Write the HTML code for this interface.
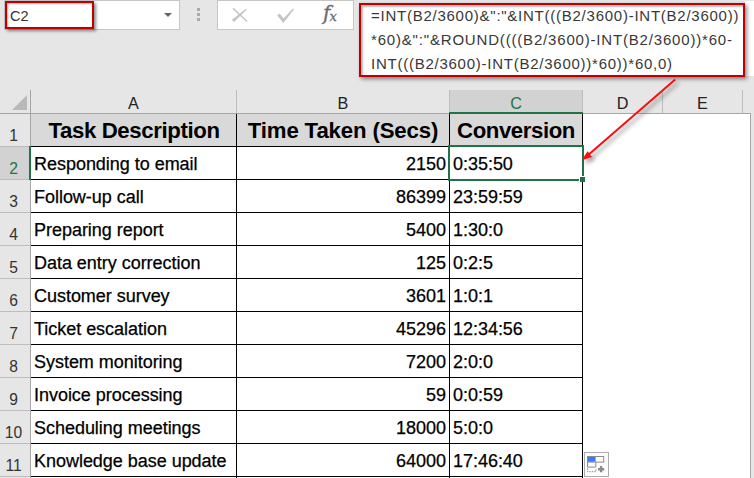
<!DOCTYPE html>
<html><head><meta charset="utf-8">
<style>
html,body{margin:0;padding:0;}
body{width:754px;height:478px;overflow:hidden;background:#e6e6e6;position:relative;font-family:"Liberation Sans",sans-serif;}
.abs{position:absolute;}
.cell{position:absolute;white-space:nowrap;color:#000;font-size:18px;letter-spacing:-0.03px;line-height:34px;height:32px;-webkit-text-stroke:0.25px #000;}
.hd{position:absolute;white-space:nowrap;color:#000;font-weight:bold;font-size:22.2px;line-height:33px;height:33px;text-align:center;}
.rh{position:absolute;left:0;width:27px;text-align:center;font-size:15.6px;color:#333;height:33px;line-height:43px;}
.ch{position:absolute;top:90px;height:23px;line-height:26px;text-align:center;font-size:16.2px;color:#222;}
.hl{position:absolute;height:1px;background:#000;}
.vl{position:absolute;width:1px;background:#000;}
.fx{position:absolute;left:371px;font-size:15px;letter-spacing:0.75px;color:#383838;white-space:nowrap;line-height:24px;height:24px;}
</style></head><body>

<!-- name box -->
<div class="abs" style="left:4px;top:0px;width:174px;height:28px;background:#fff;border:1px solid #c6c6c6;"></div>
<div class="abs" style="left:10px;top:6px;font-size:14.6px;line-height:20px;color:#333;">C2</div>
<div class="abs" style="left:5px;top:1px;width:85px;height:24px;border:2px solid #c00000;box-shadow:2px 2px 3px rgba(0,0,0,.45), inset 1px 1px 2px rgba(0,0,0,.3);"></div>
<svg class="abs" style="left:162.5px;top:12px" width="10" height="6"><path d="M1 1h8l-4 4z" fill="#666"/></svg>
<!-- dots -->
<div class="abs" style="left:197px;top:8px;width:3px;height:3px;background:#ababab"></div>
<div class="abs" style="left:197px;top:13px;width:3px;height:3px;background:#ababab"></div>
<div class="abs" style="left:197px;top:18px;width:3px;height:3px;background:#ababab"></div>
<!-- buttons box -->
<div class="abs" style="left:217px;top:0px;width:135px;height:28px;background:#fff;border:1px solid #c6c6c6;"></div>
<svg class="abs" style="left:231px;top:7px" width="18" height="17"><path d="M1.4 1.8L2.6 0.8L16.5 14L15.6 14.9z" fill="#c4c4c4"/><path d="M0.9 12.8L3 14.9L15.9 2.6L15 1.7z" fill="#c4c4c4"/></svg>
<svg class="abs" style="left:277px;top:7px" width="18" height="17"><path d="M0.2 8.4L2.6 6.6L6.5 11.4L16.1 1.2L17 2.2L6.4 16z" fill="#c4c4c4"/></svg>
<div class="abs" style="left:323px;top:1px;font-family:'DejaVu Serif',serif;font-style:italic;font-size:20px;line-height:24px;color:#6a6a6a;-webkit-text-stroke:0.3px #6a6a6a;">f</div>
<div class="abs" style="left:329.5px;top:5px;font-family:'DejaVu Serif',serif;font-style:italic;font-size:13px;line-height:24px;color:#6a6a6a;-webkit-text-stroke:0.3px #6a6a6a;">x</div>

<!-- formula box -->
<div class="abs" style="left:745px;top:1px;width:9px;height:75px;background:#fff;"></div>
<div class="abs" style="left:358.5px;top:3px;width:382.5px;height:70px;background:#fff;border:2px solid #c00000;box-shadow:2px 2px 4px rgba(0,0,0,.45), inset 2px 2px 2px rgba(0,0,0,.28);"></div>
<div class="fx" style="top:4px;">=INT(B2/3600)&amp;":"&amp;INT(((B2/3600)-INT(B2/3600))</div>
<div class="fx" style="top:28px;letter-spacing:0.82px;">*60)&amp;":"&amp;ROUND((((B2/3600)-INT(B2/3600))*60-</div>
<div class="fx" style="top:52px;letter-spacing:0.75px;">INT(((B2/3600)-INT(B2/3600))*60))*60,0)</div>

<!-- sheet white area -->
<div class="abs" style="left:31px;top:114px;width:719px;height:364px;background:#fff;"></div>
<div class="abs" style="left:750px;top:113px;width:1px;height:365px;background:#a6a6a6;"></div>
<!-- header bottom line -->
<div class="abs" style="left:0;top:113px;width:751px;height:1px;background:#a6a6a6;"></div>
<!-- col header separators -->
<div class="abs" style="left:30px;top:90px;width:1px;height:388px;background:#a6a6a6;"></div>
<div class="abs" style="left:236px;top:90px;width:1px;height:23px;background:#bdbdbd;"></div>
<div class="abs" style="left:449px;top:90px;width:1px;height:23px;background:#bdbdbd;"></div>
<div class="abs" style="left:582px;top:90px;width:1px;height:23px;background:#bdbdbd;"></div>
<div class="abs" style="left:662px;top:90px;width:1px;height:23px;background:#bdbdbd;"></div>
<div class="abs" style="left:742px;top:90px;width:1px;height:23px;background:#bdbdbd;"></div>
<!-- corner triangle -->
<svg class="abs" style="left:11px;top:94px" width="17" height="17"><path d="M16 1v15H1z" fill="#b9b9b9"/></svg>
<!-- selected col header -->
<div class="abs" style="left:450px;top:90px;width:132px;height:22px;background:#d2d2d2;"></div>
<div class="ch" style="left:31px;width:205px;">A</div>
<div class="ch" style="left:237px;width:212px;">B</div>
<div class="ch" style="left:450px;width:132px;color:#217346;">C</div>
<div class="ch" style="left:583px;width:79px;">D</div>
<div class="ch" style="left:663px;width:79px;">E</div>

<!-- row headers -->
<div class="abs" style="left:0;top:147px;width:29px;height:32px;background:#d2d2d2;"></div>
<div class="rh" style="top:114px;">1</div>
<div class="rh" style="top:147px;color:#217346;">2</div>
<div class="rh" style="top:180px;">3</div>
<div class="rh" style="top:213px;">4</div>
<div class="rh" style="top:246px;">5</div>
<div class="rh" style="top:279px;">6</div>
<div class="rh" style="top:312px;">7</div>
<div class="rh" style="top:345px;">8</div>
<div class="rh" style="top:378px;">9</div>
<div class="rh" style="top:411px;">10</div>
<div class="rh" style="top:444px;">11</div>
<!-- row header lines -->
<div class="abs" style="left:0;top:146px;width:30px;height:1px;background:#bdbdbd"></div>
<div class="abs" style="left:0;top:179px;width:30px;height:1px;background:#bdbdbd"></div>
<div class="abs" style="left:0;top:212px;width:30px;height:1px;background:#bdbdbd"></div>
<div class="abs" style="left:0;top:245px;width:30px;height:1px;background:#bdbdbd"></div>
<div class="abs" style="left:0;top:278px;width:30px;height:1px;background:#bdbdbd"></div>
<div class="abs" style="left:0;top:311px;width:30px;height:1px;background:#bdbdbd"></div>
<div class="abs" style="left:0;top:344px;width:30px;height:1px;background:#bdbdbd"></div>
<div class="abs" style="left:0;top:377px;width:30px;height:1px;background:#bdbdbd"></div>
<div class="abs" style="left:0;top:410px;width:30px;height:1px;background:#bdbdbd"></div>
<div class="abs" style="left:0;top:443px;width:30px;height:1px;background:#bdbdbd"></div>
<div class="abs" style="left:0;top:476px;width:30px;height:1px;background:#bdbdbd"></div>

<!-- header row bg -->
<div class="abs" style="left:31px;top:114px;width:551px;height:32px;background:#d9d9d9;"></div>
<!-- grid lines -->
<div class="hl" style="left:31px;top:146px;width:552px;"></div>
<div class="hl" style="left:31px;top:179px;width:552px;"></div>
<div class="hl" style="left:31px;top:212px;width:552px;"></div>
<div class="hl" style="left:31px;top:245px;width:552px;"></div>
<div class="hl" style="left:31px;top:278px;width:552px;"></div>
<div class="hl" style="left:31px;top:311px;width:552px;"></div>
<div class="hl" style="left:31px;top:344px;width:552px;"></div>
<div class="hl" style="left:31px;top:377px;width:552px;"></div>
<div class="hl" style="left:31px;top:410px;width:552px;"></div>
<div class="hl" style="left:31px;top:443px;width:552px;"></div>
<div class="hl" style="left:31px;top:476px;width:552px;"></div>
<div class="vl" style="left:236px;top:114px;height:364px;"></div>
<div class="vl" style="left:449px;top:114px;height:364px;"></div>
<div class="vl" style="left:582px;top:114px;height:364px;"></div>

<!-- header texts -->
<div class="hd" style="left:31.5px;top:114px;width:205px;letter-spacing:-0.375px;">Task Description</div>
<div class="hd" style="left:237px;top:114px;width:212px;letter-spacing:-0.135px;">Time Taken (Secs)</div>
<div class="hd" style="left:450px;top:114px;width:132px;letter-spacing:-0.42px;">Conversion</div>

<!-- col A -->
<div class="cell" style="left:34px;top:147px;">Responding to email</div>
<div class="cell" style="left:34px;top:180px;">Follow-up call</div>
<div class="cell" style="left:34px;top:213px;">Preparing report</div>
<div class="cell" style="left:34px;top:246px;">Data entry correction</div>
<div class="cell" style="left:34px;top:279px;">Customer survey</div>
<div class="cell" style="left:34px;top:312px;">Ticket escalation</div>
<div class="cell" style="left:34px;top:345px;">System monitoring</div>
<div class="cell" style="left:34px;top:378px;">Invoice processing</div>
<div class="cell" style="left:34px;top:411px;">Scheduling meetings</div>
<div class="cell" style="left:34px;top:444px;">Knowledge base update</div>
<!-- col B -->
<div class="cell" style="left:237px;width:209px;text-align:right;top:147px;">2150</div>
<div class="cell" style="left:237px;width:209px;text-align:right;top:180px;">86399</div>
<div class="cell" style="left:237px;width:209px;text-align:right;top:213px;">5400</div>
<div class="cell" style="left:237px;width:209px;text-align:right;top:246px;">125</div>
<div class="cell" style="left:237px;width:209px;text-align:right;top:279px;">3601</div>
<div class="cell" style="left:237px;width:209px;text-align:right;top:312px;">45296</div>
<div class="cell" style="left:237px;width:209px;text-align:right;top:345px;">7200</div>
<div class="cell" style="left:237px;width:209px;text-align:right;top:378px;">59</div>
<div class="cell" style="left:237px;width:209px;text-align:right;top:411px;">18000</div>
<div class="cell" style="left:237px;width:209px;text-align:right;top:444px;">64000</div>
<!-- col C -->
<div class="cell" style="left:453px;top:147px;">0:35:50</div>
<div class="cell" style="left:453px;top:180px;">23:59:59</div>
<div class="cell" style="left:453px;top:213px;">1:30:0</div>
<div class="cell" style="left:453px;top:246px;">0:2:5</div>
<div class="cell" style="left:453px;top:279px;">1:0:1</div>
<div class="cell" style="left:453px;top:312px;">12:34:56</div>
<div class="cell" style="left:453px;top:345px;">2:0:0</div>
<div class="cell" style="left:453px;top:378px;">0:0:59</div>
<div class="cell" style="left:453px;top:411px;">5:0:0</div>
<div class="cell" style="left:453px;top:444px;">17:46:40</div>

<!-- selection -->
<div class="abs" style="left:449px;top:112px;width:134px;height:2px;background:#217346;"></div>
<div class="abs" style="left:29px;top:146px;width:2px;height:34px;background:#217346;"></div>
<div class="abs" style="left:448px;top:145px;width:132px;height:32px;border:2px solid #217346;"></div>
<div class="abs" style="left:579px;top:176px;width:5px;height:5px;background:#217346;border:1px solid #fff;border-bottom:0;border-right:0;"></div>

<!-- arrow -->
<svg class="abs" style="left:560px;top:70px;overflow:visible" width="140" height="110">
<g style="filter:drop-shadow(3px 3px 2px rgba(0,0,0,.42))">
<path d="M115.2 9.5L27 86" stroke="#fb0d0d" stroke-width="2" fill="none"/>
<path d="M21.5 90.5L27.6 81.3L32 87z" fill="#fb0d0d"/>
</g></svg>

<!-- autofill options icon -->
<div class="abs" style="left:584px;top:452px;width:23px;height:23px;background:#fdfdfd;border:1px solid #ababab;"></div>
<svg class="abs" style="left:584px;top:452px" width="25" height="25">
<rect x="4" y="5" width="7.6" height="4.8" fill="#3b78ff"/>
<rect x="3.5" y="4.5" width="16.2" height="5.6" fill="none" stroke="#8c8c8c"/>
<path d="M11.8 10.1v5h-8.3v-5" fill="none" stroke="#8c8c8c"/>
<path d="M3.6 16.4v3.3h8.3v-3.3" stroke="#7c7c7c" stroke-dasharray="1.3 1.2" fill="none"/>
<path d="M14 17.2h6.2M17.1 14v6.3" stroke="#8a8a8a" stroke-width="2.4" fill="none"/>
</svg>
</body></html>
